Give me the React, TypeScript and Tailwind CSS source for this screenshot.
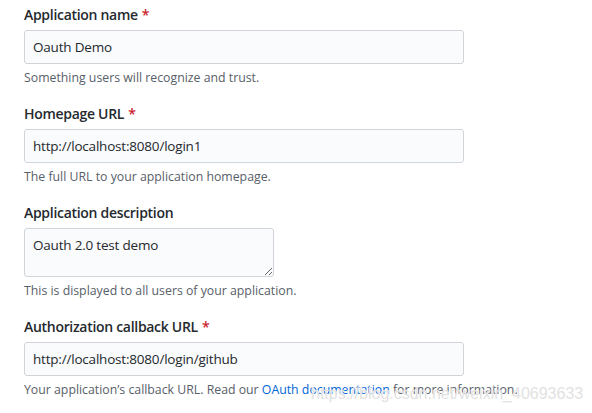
const font = { fontFamily: '"Open Sans", "Liberation Sans", sans-serif' }

function Label({ text, required }: { text: string; required?: boolean }) {
  return (
    <label className="block h-[21px] text-[14px] font-semibold leading-[21px] tracking-[-0.3px] text-[#24292e]">
      {text}
      {required && <span className="ml-1 text-[#cb2431]">*</span>}
    </label>
  )
}

function Note({ children }: { children: React.ReactNode }) {
  return <p className="mt-[5px] h-[18px] text-[12.3px] leading-[18px] text-[#586069]">{children}</p>
}

function Field({ label, value, note }: { label: string; value: string; note: React.ReactNode }) {
  return (
    <div className="mb-4">
      <Label text={label} required />
      <input
        readOnly
        value={value}
        className="mt-[5px] block h-[34px] w-[440px] rounded-[3px] border border-[#d1d5da] bg-[#fafbfc] px-2 text-[13.5px] tracking-[-0.2px] text-[#24292e] outline-none"
      />
      <Note>{note}</Note>
    </div>
  )
}

export default function App() {
  return (
    <div className="relative min-h-[413px] w-[592px] bg-white pl-6 pt-1" style={font}>
      <Field label="Application name" value="Oauth Demo" note="Something users will recognize and trust." />
      <Field label="Homepage URL" value="http://localhost:8080/login1" note="The full URL to your application homepage." />

      <div className="mb-4">
        <Label text="Application description" />
        <textarea
          readOnly
          defaultValue="Oauth 2.0 test demo"
          className="mt-[5px] block h-[49px] w-[250px] rounded-[3px] border border-[#d1d5da] bg-[#fafbfc] px-2 py-[6px] text-[13.5px] leading-[20px] tracking-[-0.2px] text-[#24292e] outline-none"
        />
        <Note>This is displayed to all users of your application.</Note>
      </div>

      <Field
        label="Authorization callback URL"
        value="http://localhost:8080/login/github"
        note={
          <>
            Your application’s callback URL. Read our{" "}
            <a className="text-[#0366d6]">OAuth documentation</a> for more information.
          </>
        }
      />

      {/* blog watermark stamped over the screenshot */}
      <div
        className="pointer-events-none absolute left-[311px] top-[382px] whitespace-nowrap text-[16px] text-[#e2e2e2]"
        style={{ fontFamily: '"Liberation Sans", Arial, sans-serif', textShadow: "0 0 1px #ffffff" }}
      >
        https://blog.csdn.net/weixin_40693633
      </div>
    </div>
  )
}
